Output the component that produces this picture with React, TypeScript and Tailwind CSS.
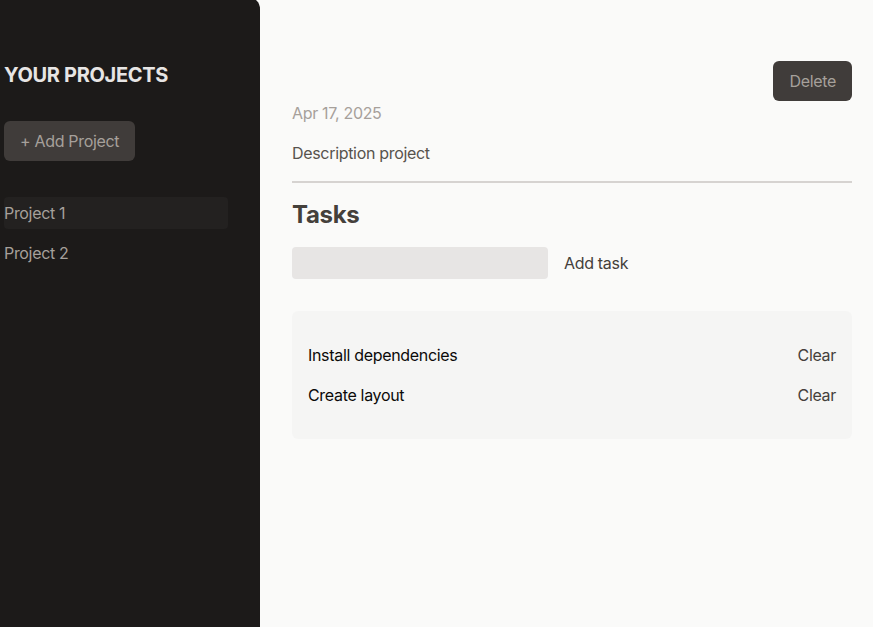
import React from "react";

const projects = ["Project 1", "Project 2"];
const tasks = ["Install dependencies", "Create layout"];

export default function App() {
  return (
    <div
      className="flex gap-8 h-screen overflow-hidden bg-[#fafaf9] tracking-[-0.02em]"
      style={{ fontFamily: "Inter, 'Noto Sans', sans-serif" }}
    >
      <aside className="w-[260px] shrink-0 -mt-[3px] pt-16 pl-1 pr-8 bg-[#1c1a19] rounded-tr-xl">
        <h2 className="mb-8 text-xl leading-7 font-bold uppercase text-stone-200">
          Your Projects
        </h2>
        <div>
          <button className="px-4 py-2 text-base leading-6 rounded-md bg-[#403c3a] text-stone-400">
            + Add Project
          </button>
        </div>
        <ul className="mt-8">
          {projects.map((p, i) => (
            <li key={p}>
              <button
                className={
                  i === 0
                    ? "w-full text-left py-1 my-1 rounded-sm text-base leading-6 bg-[#232120] text-stone-400"
                    : "w-full text-left py-1 my-1 rounded-sm text-base leading-6 text-stone-400"
                }
              >
                {p}
              </button>
            </li>
          ))}
        </ul>
      </aside>
      <div className="w-[560px] mt-[61px]">
        <header className="pb-4 mb-4 border-b-2 border-stone-300">
          <div className="flex items-center justify-between">
            <h1 className="text-3xl font-bold text-stone-600"></h1>
            <button className="px-4 py-2 text-base leading-6 rounded-md bg-[#403c3a] text-stone-400">
              Delete
            </button>
          </div>
          <p className="mb-4 text-base leading-6 text-stone-400">Apr 17, 2025</p>
          <p className="text-base leading-6 text-stone-600">Description project</p>
        </header>
        <section>
          <h2 className="text-2xl leading-8 font-bold text-stone-700 mb-4">Tasks</h2>
          <div className="flex items-center gap-4">
            <input className="w-64 h-8 px-2 py-1 rounded-sm bg-stone-200 outline-none" />
            <button className="text-base leading-6 text-stone-700">Add task</button>
          </div>
          <ul className="mt-8 p-4 rounded-md bg-stone-100">
            {tasks.map((t) => (
              <li key={t} className="flex justify-between my-4 text-base leading-6">
                <span className="text-stone-950">{t}</span>
                <button className="text-stone-700">Clear</button>
              </li>
            ))}
          </ul>
        </section>
      </div>
    </div>
  );
}
